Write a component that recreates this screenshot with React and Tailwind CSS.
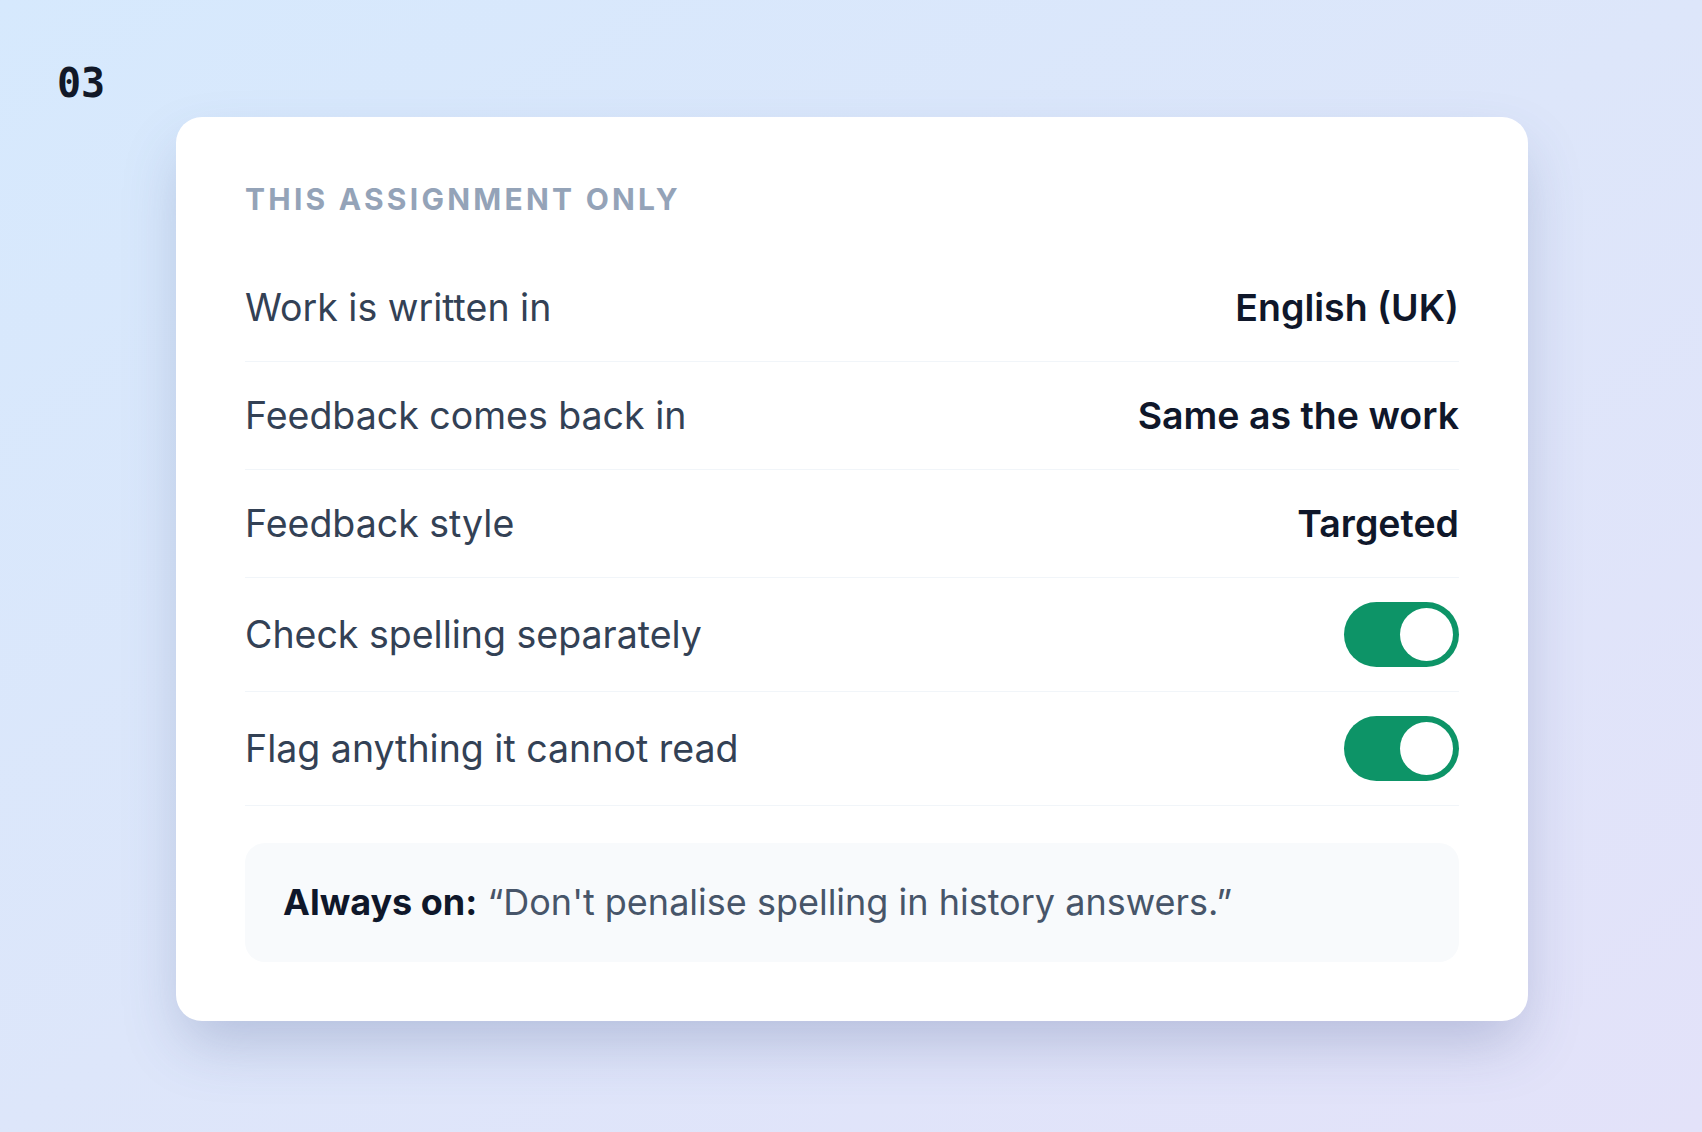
import React from "react";

const rows = [
  { label: "Work is written in", value: "English (UK)" },
  { label: "Feedback comes back in", value: "Same as the work" },
  { label: "Feedback style", value: "Targeted" },
  { label: "Check spelling separately", toggle: true },
  { label: "Flag anything it cannot read", toggle: true },
];

function Toggle() {
  return (
    <div className="flex h-[65px] w-[115px] items-center justify-end rounded-full bg-[#0d9467] pr-[6px]">
      <div className="h-[53px] w-[53px] rounded-full bg-white" />
    </div>
  );
}

export default function App() {
  return (
    <div
      className="min-h-[1132px] w-full bg-linear-to-br from-[#d6e9fd] via-[#dde6fa] to-[#e3e2f9] pt-[58px]"
      style={{ fontFamily: "Inter, 'Noto Sans', sans-serif" }}
    >
      <div
        className="ml-[57px] text-[40px] font-bold leading-[50px] text-[#111827]"
        style={{ fontFamily: "'DejaVu Sans Mono', monospace" }}
      >
        03
      </div>
      <div className="ml-[176px] mt-[9px] w-[1352px] rounded-[26px] bg-white px-[69px] pb-[59px] pt-[60px] shadow-[0_28px_60px_-8px_rgba(70,85,140,0.28)]">
        <div className="mb-[32px] text-[30px] font-bold uppercase leading-[45px] tracking-[0.108em] text-[#94a3b8]">
          This assignment only
        </div>
        <div className="flex flex-col">
          {rows.map((r) => (
            <div
              key={r.label}
              className="flex items-center justify-between border-b border-[#f1f5f9] py-6"
            >
              <span className="text-[37.5px] leading-[59px] text-[#334155]">{r.label}</span>
              {r.toggle ? (
                <Toggle />
              ) : (
                <span className="text-[37.5px] font-semibold leading-[59px] text-[#0f172a]">
                  {r.value}
                </span>
              )}
            </div>
          ))}
        </div>
        <div className="mt-[37px] rounded-[20px] bg-[#f8fafc] px-[38px] py-[33px] text-[36px] leading-[53px] text-[#475569]">
          <span className="font-bold text-[#0f172a]">Always on:</span>{" "}
          “Don't penalise spelling in history answers.”
        </div>
      </div>
    </div>
  );
}
